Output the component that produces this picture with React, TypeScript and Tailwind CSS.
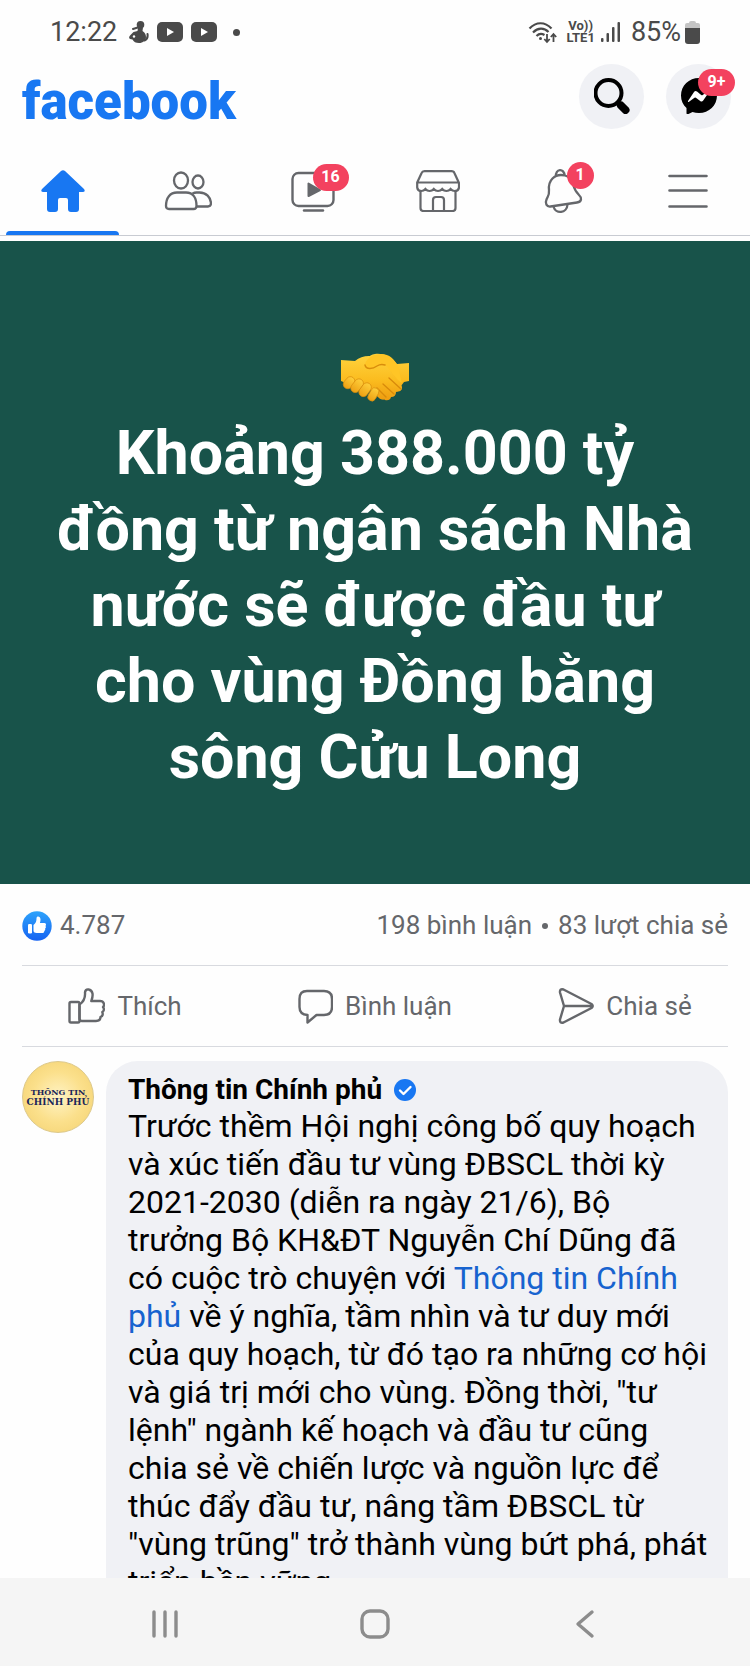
import React from 'react';

const StatusBar = () => (
  <div className="flex h-16 shrink-0 items-center justify-between px-[50px] text-[#4a4a4a]">
    <div className="flex items-center">
      <span className="text-[27px] leading-8">12:22</span>
      <svg className="ml-3 h-[22px] w-5" viewBox="0 0 20 22" fill="currentColor">
        <circle cx="11.500" cy="3.800" r="3.800" />
        <path d="M9 6.500h5l-.5 3.500c2.500 1.500 3.500 3.500 3.500 6 0 3.500-3 6-7 6-3 0-5.500-1-6.500-3.500L1 18c-1.500-1-1-2.500.5-4l3-3 4-1z" />
        <path d="M12 5.500L4 8M15.500 19.500c2.500-1 3.500-3.500 3-6.500" fill="none" stroke="currentColor" strokeWidth="2" strokeLinecap="round" />
        <circle cx="5" cy="15.500" r="1.200" fill="#fff" />
      </svg>
      {[0, 1].map((item) => (
        <svg key={item} className="ml-2 h-5 w-[26px]" viewBox="0 0 26 20">
          <rect width="26" height="20" rx="5" fill="#4a4a4a" />
          <path d="M10 6l7 4-7 4z" fill="#fff" />
        </svg>
      ))}
      <span className="ml-4 h-[7px] w-[7px] rounded-full bg-[#4a4a4a]" />
    </div>

    <div className="flex items-center">
      <svg className="h-6 w-[30px]" viewBox="0 0 30 24" fill="none" stroke="currentColor" strokeWidth="2.200">
        <path d="M1.500 8.500C8 1.500 17 1.500 23.500 8.500" />
        <path d="M5 12.500C10 7.500 16 7.500 20.500 12" />
        <path d="M8.500 16c2.500-2.500 5.500-2.500 8-1" />
        <circle cx="12.500" cy="18.500" r="1.500" fill="currentColor" stroke="none" />
        <path d="M19 14v8M16.300 19l2.700 3 2.700-3M25.500 22v-8M22.800 17l2.700-3 2.700 3" strokeWidth="1.800" />
      </svg>
      <div className="ml-2 flex flex-col items-center text-[13px] font-bold leading-3">
        <span>Vo))</span>
        <span>LTE1</span>
      </div>
      <svg className="ml-1.5 h-5 w-5" viewBox="0 0 20 20" fill="currentColor">
        <rect x="0" y="16" width="2.500" height="4" rx="1" />
        <rect x="5.500" y="11" width="2.500" height="9" rx="1" />
        <rect x="11" y="5" width="2.500" height="15" rx="1" />
        <rect x="16.500" y="0" width="2.500" height="20" rx="1" />
      </svg>
      <span className="ml-2.5 text-[27px] leading-8">85%</span>
      <svg className="ml-1 h-[23px] w-[15px]" viewBox="0 0 15 23">
        <path d="M4 2Q4 0 6 0h3q2 0 2 2h2q2 0 2 2v4H0V4q0-2 2-2z" fill="#c4c4c4" />
        <path d="M0 7h15v13q0 3-3 3H3q-3 0-3-3z" fill="#4a4a4a" />
      </svg>
    </div>
  </div>
);

const Header = () => (
  <header className="flex h-16 shrink-0 items-center justify-between pl-[22px] pr-[19px]">
    <h1 className="pt-3 text-[51px] font-black leading-[60px] text-[#1877f2]">facebook</h1>
    <div className="flex gap-[22px]">
      <button aria-label="Search" className="flex h-[65px] w-[65px] items-center justify-center rounded-full bg-[#f0f1f5]">
        <svg className="h-9 w-9" viewBox="0 0 36 36" fill="none" stroke="#000">
          <circle cx="14.500" cy="15" r="13" strokeWidth="4" />
          <path d="M24 24l1.500 1.500" strokeWidth="4" />
          <path d="M27 27.500l4.500 4.500" strokeWidth="8" strokeLinecap="round" />
        </svg>
      </button>
      <button aria-label="Messenger" className="relative flex h-[65px] w-[65px] items-center justify-center rounded-full bg-[#f0f1f5]">
        <svg className="h-9 w-9" viewBox="0 0 36 36">
          <path d="M18 0C8 0 0 7.500 0 17.500c0 5 2 9.500 5.500 12.500v5c0 1.500 1 1.500 2 1l4-2c2 .7 4.200 1 6.500 1 10 0 18-7.500 18-17.500S28 0 18 0z" />
          <path d="M7 23l6-9q1.300-1.700 3-.4l4.200 3.300q.8.500 1.500 0l5.500-3.900q1.500-.6.900.9l-5.900 8.600q-1.300 1.800-3 .5l-4.300-3.200q-.7-.4-1.400 0L8 23.700q-1.400.6-1-.7z" fill="#fff" />
        </svg>
        <span className="absolute -right-1 top-[5px] flex h-[27px] w-[37px] items-center justify-center rounded-full bg-[#f3425f] text-base font-bold text-white">
          9+
        </span>
      </button>
    </div>
  </header>
);

const HomeIcon = () => (
  <svg className="h-[42px] w-11" viewBox="0 0 44 42" fill="#1877f2">
    <path d="M20 1q2-1.600 4 0l19 18q2 3-1.500 3H38v17q0 3-3 3h-5q-3 0-3-3V30q0-2-2-2h-6q-2 0-2 2v9q0 3-3 3H9q-3 0-3-3V22H2.500Q-1 22 1 19z" />
  </svg>
);

const FriendsIcon = () => (
  <svg className="h-[42px] w-12" viewBox="0 0 48 42" fill="none" stroke="currentColor" strokeWidth="2.300">
    <ellipse cx="17" cy="10.500" rx="7" ry="8" />
    <ellipse cx="34" cy="12" rx="5.500" ry="6.500" />
    <path d="M2 36c0-8 4-13.500 11-13.500h9c7 0 10.500 5.500 10.500 13.500q0 3-3 3h-24.500q-3 0-3-3z" />
    <path d="M28.500 23.500q2-1 4-1h3c7 0 11 5 11.500 10.500q0 3.500-3 3.500H32.500" />
  </svg>
);

const WatchIcon = () => (
  <svg className="h-[42px] w-11" viewBox="0 0 44 42" fill="none" stroke="currentColor" strokeWidth="2.400">
    <rect x="1.500" y="3" width="41" height="33" rx="6" />
    <path d="M17.500 13.500v12.500L29 20z" fill="currentColor" strokeWidth="2" strokeLinejoin="round" />
    <path d="M13 40.500h19" strokeLinecap="round" />
  </svg>
);

const MarketIcon = () => (
  <svg className="h-[42px] w-11" viewBox="0 0 44 42" fill="none" stroke="currentColor" strokeWidth="2.200">
    <path d="M1.200 12.500L5.500 3.200q.8-2 3-2h27q2.300 0 3 2l4.300 9.300z" strokeLinejoin="round" />
    <path d="M1.200 12.500v5q.5 3.500 4 3.500 2.500 0 4.200-2 1.750 2 4.200 2t4.200-2q1.750 2 4.200 2t4.200-2q1.750 2 4.200 2t4.200-2q1.750 2 4.200 2 3.700 0 4.200-3.500v-5" />
    <path d="M4.500 21V38q0 3 3 3h29q3 0 3-3V21" />
    <path d="M17 41V30q0-3 3-3h5q3 0 3 3v11" />
  </svg>
);

const BellIcon = () => (
  <svg className="h-[46px] w-11" viewBox="0 0 44 46" fill="none" stroke="currentColor" strokeWidth="2.300">
    <path d="M15 8.500c-1-8 8.500-8.500 8.500-1" />
    <path d="M24 7.500C13 5 7 13 8 22c.5 5-1 6-2.500 9.500-1.800 4 .2 7.500 4 7L36 34.500c5-.8 5-4.800 2-7.500-4-4-5-7-6-11-1.300-5-4-7.500-8-8.500z" />
    <path d="M12.500 38.500c2 8 13.500 7 14-2" />
  </svg>
);

const MenuIcon = () => (
  <svg className="h-[42px] w-10" viewBox="0 0 40 42" stroke="currentColor" strokeWidth="2.600" strokeLinecap="round">
    <path d="M1.500 6h37M1.500 20.500h37M1.500 36.500h37" />
  </svg>
);

const tabs = [
  { label: 'Home', icon: HomeIcon, active: true },
  { label: 'Friends', icon: FriendsIcon },
  { label: 'Watch', icon: WatchIcon, badge: '16' },
  { label: 'Marketplace', icon: MarketIcon },
  { label: 'Notifications', icon: BellIcon, badge: '1' },
  { label: 'Menu', icon: MenuIcon }
];

const TabBar = () => (
  <nav className="grid h-[108px] shrink-0 grid-cols-6 border-b border-[#c8cbd2] text-[#65676b]">
    {tabs.map((tab) => {
      const IconComponent = tab.icon;
      return (
        <button key={tab.label} aria-label={tab.label} className="relative flex items-center justify-center pt-[18px]">
          <span className="relative">
            <IconComponent />
            {tab.badge && (
              <span
                className={`absolute -top-1.5 flex h-[27px] items-center justify-center rounded-full bg-[#f3425f] text-base font-bold text-white ${
                  tab.badge.length > 1 ? 'left-[22px] w-9' : 'left-[26px] w-[27px]'
                }`}
              >
                {tab.badge}
              </span>
            )}
          </span>
          {tab.active && <span className="absolute inset-x-1.5 bottom-0 h-1 rounded-t bg-[#1877f2]" />}
        </button>
      );
    })}
  </nav>
);

const Handshake = () => (
  <svg className="h-[50px] w-[68px]" viewBox="0 0 68 50">
    <defs>
      <linearGradient id="skin" x1="0" y1="0" x2="0" y2="1">
        <stop offset="0" stopColor="#ffd23c" />
        <stop offset="0.550" stopColor="#fbbc1f" />
        <stop offset="1" stopColor="#ee9d10" />
      </linearGradient>
      <linearGradient id="finger" x1="0" y1="0" x2="0" y2="1">
        <stop offset="0" stopColor="#ffcf3b" />
        <stop offset="1" stopColor="#eda013" />
      </linearGradient>
    </defs>
    <path d="M68 11L56 12C50 5 43 1 34 2q-5 .5-8 5l4 20 14 21q5 1 6-3 5 0 5-5 5-1 5-6l3-4 5-1z" fill="url(#skin)" />
    <path d="M0 8l14 1q6-5 14-5l8 1q8 5 16 18c6 8 9 9 9 13 0 3-4 5-8 2 2 5-3 8-7 5 1 5-5 6-8 3L24 33 7 32 0 29z" fill="url(#skin)" />
    <path d="M48 26l12 11M42 32l11 10M36 36l9 9" stroke="#d88a0b" strokeWidth="1.300" fill="none" strokeLinecap="round" />
    <path d="M24 12c2-6 8-10 16-10 9 0 13 5 17 12 2 6 2 12 4 17-7-4-11-13-17-18-4-1-5 0-8 1-4 4-13 4-12-2z" fill="#ffc526" />
    <path d="M24 13c1 5 8 4 12 1 3-2 5-2 8-1" stroke="#d98d0c" strokeWidth="1.400" fill="none" strokeLinecap="round" />
    <g fill="url(#finger)" stroke="#d98d0c" strokeWidth="0.700">
      <rect x="4" y="24" width="9" height="13" rx="4.500" transform="rotate(40 8 30)" />
      <rect x="12" y="26" width="9" height="15" rx="4.500" transform="rotate(38 16 33)" />
      <rect x="20" y="30" width="9" height="15" rx="4.500" transform="rotate(36 24 37)" />
      <rect x="29" y="35" width="8" height="14" rx="4" transform="rotate(30 32 41)" />
    </g>
  </svg>
);

const ThumbIcon = () => (
  <svg className="h-9 w-[37px]" viewBox="0 0 37 36" fill="none" stroke="currentColor" strokeWidth="2.400" strokeLinejoin="round">
    <rect x="1.500" y="14" width="10" height="20.500" rx="1.500" />
    <path d="M11.500 16.500c3-2 6-6 5.500-12 .5-4.500 6.500-4 7.500 1 .5 3-.5 5.500-1.200 7.500H32c4 0 5 4 3 6 1.500 2 1 4-.7 5 1 2.500 0 4.500-1.800 5 0 3-2 4-4.500 4H14q-2.500 0-2.500-2.500z" />
  </svg>
);

const CommentIcon = () => (
  <svg className="h-9 w-[35px]" viewBox="0 0 35 36" fill="none" stroke="currentColor" strokeWidth="2.400" strokeLinejoin="round">
    <path d="M9 3h17q8 0 8 8v8q0 8-8 8h-7.500L9.500 34.500V27Q1.500 26.500 1.500 19v-8q0-8 7.500-8z" />
  </svg>
);

const ShareIcon = () => (
  <svg className="h-9 w-9" viewBox="0 0 36 36" fill="none" stroke="currentColor" strokeWidth="2.400" strokeLinejoin="round">
    <path d="M5.500 1.500L33.500 16q2.500 2 0 4L5.500 34.500q-4 1-3.500-3L6 18 2 4.500q-.5-4 3.500-3zM6 18h28" />
  </svg>
);

const actions = [
  { label: 'Thích', icon: ThumbIcon },
  { label: 'Bình luận', icon: CommentIcon },
  { label: 'Chia sẻ', icon: ShareIcon }
];

const Post = () => (
  <article className="mt-[5px]">
    <div className="bg-[#18534a] px-12 pb-[89px] pt-[98px] text-center text-white">
      <div className="flex h-[76px] items-center justify-center">
        <Handshake />
      </div>
      <p className="text-[61px] font-bold leading-[76px]">
        Khoảng 388.000 tỷ đồng từ ngân sách Nhà nước sẽ được đầu tư cho vùng Đồng bằng sông Cửu Long
      </p>
    </div>

    <div className="mx-[22px] flex h-[82px] items-center justify-between border-b border-[#d8dadf] pt-0.5 text-[26px] text-[#65676b]">
      <div className="flex items-center gap-2">
        <svg className="h-[30px] w-[30px]" viewBox="0 0 30 30">
          <defs>
            <linearGradient id="like" x1="0" y1="0" x2="0" y2="1">
              <stop offset="0" stopColor="#2ea3fb" />
              <stop offset="1" stopColor="#1663f2" />
            </linearGradient>
          </defs>
          <circle cx="15" cy="15" r="14.700" fill="url(#like)" />
          <rect x="6" y="13" width="4" height="9.500" rx="1.300" fill="#fff" />
          <path d="M11.500 14c2.500-2 3-4 3-6.500 0-3 4-2.500 4 1 0 1.500-.3 2.800-.6 3.500h4.300c2 0 2.300 2 1.300 3 .7 1 .4 2-.4 2.500.4 1.200 0 2-.8 2.400 0 1.500-.8 2-2 2h-5.800c-1.500 0-3-.7-3-2.200z" fill="#fff" />
        </svg>
        <span>4.787</span>
      </div>
      <div className="flex items-center gap-2.5">
        <span>198 bình luận</span>
        <span className="h-1.5 w-1.5 rounded-full bg-[#65676b]" />
        <span>83 lượt chia sẻ</span>
      </div>
    </div>

    <div className="grid h-20 grid-cols-3 text-[26px] text-[#65676b]">
      {actions.map((action) => {
        const IconComponent = action.icon;
        return (
          <button key={action.label} className="flex items-center justify-center gap-3">
            <IconComponent />
            <span>{action.label}</span>
          </button>
        );
      })}
    </div>
    <hr className="mx-[22px] border-[#d8dadf]" />
  </article>
);

const Avatar = () => (
  <div className="flex h-[72px] w-[72px] shrink-0 flex-col items-center justify-center rounded-full border border-[#dcc88a] bg-radial from-[#fff3c4] via-[#fbe08c] to-[#f3d06c] font-['DejaVu_Serif',serif] font-bold text-[#1b2559]">
    <span className="text-[8px] leading-[10px]">THÔNG TIN</span>
    <span className="text-[9px] leading-[11px]">CHÍNH PHỦ</span>
  </div>
);

const Comment = () => (
  <section className="flex items-start gap-3 px-[22px] pt-[14px]">
    <Avatar />
    <div className="flex-1 rounded-[32px] bg-[#f0f1f5] py-3 pl-[22px] pr-[18px] text-black">
      <div className="flex items-center gap-3">
        <h2 className="text-[28px] font-bold leading-[34px]">Thông tin Chính phủ</h2>
        <svg className="h-[22px] w-[22px]" viewBox="0 0 22 22">
          <circle cx="11" cy="11" r="11" fill="#1877f2" />
          <path d="M6 11.500l3.500 3.500L16.500 8" fill="none" stroke="#fff" strokeWidth="2.400" strokeLinecap="round" strokeLinejoin="round" />
        </svg>
      </div>
      <p className="text-[32px] leading-[38px]">
        Trước thềm Hội nghị công bố quy hoạch và xúc tiến đầu tư vùng ĐBSCL thời kỳ 2021-2030 (diễn ra ngày 21/6), Bộ
        trưởng Bộ KH&amp;ĐT Nguyễn Chí Dũng đã có cuộc trò chuyện với{' '}
        <a href="#" className="text-[#1763cf]">
          Thông tin Chính phủ
        </a>{' '}
        về ý nghĩa, tầm nhìn và tư duy mới của quy hoạch, từ đó tạo ra những cơ hội và giá trị mới cho vùng. Đồng thời,
        "tư lệnh" ngành kế hoạch và đầu tư cũng chia sẻ về chiến lược và nguồn lực để thúc đẩy đầu tư, nâng tầm ĐBSCL từ
        "vùng trũng" trở thành vùng bứt phá, phát triển bền vững.
      </p>
    </div>
  </section>
);

const SystemNav = () => (
  <nav className="flex h-[88px] shrink-0 items-center justify-around bg-[#f5f5f5] px-[60px] pt-1 text-[#8c8c8c]">
    <button aria-label="Recents">
      <svg className="h-[30px] w-[30px]" viewBox="0 0 30 30" stroke="currentColor" strokeWidth="3.400" strokeLinecap="round">
        <path d="M4 3v24M15 3v24M26 3v24" />
      </svg>
    </button>
    <button aria-label="Home screen">
      <svg className="h-[30px] w-[30px]" viewBox="0 0 30 30" fill="none" stroke="currentColor" strokeWidth="3.400">
        <rect x="2" y="2" width="26" height="26" rx="8" />
      </svg>
    </button>
    <button aria-label="Back">
      <svg className="h-[30px] w-[30px]" viewBox="0 0 30 30" fill="none" stroke="currentColor" strokeWidth="3.400" strokeLinecap="round" strokeLinejoin="round">
        <path d="M22 3L8 15l14 12" />
      </svg>
    </button>
  </nav>
);

const App = () => {
  return (
    <div className="flex h-screen flex-col bg-[#fefefe] font-['Roboto',sans-serif]">
      <StatusBar />
      <Header />
      <TabBar />
      <main className="min-h-0 flex-1 overflow-hidden">
        <Post />
        <Comment />
      </main>
      <SystemNav />
    </div>
  );
};

export default App;
